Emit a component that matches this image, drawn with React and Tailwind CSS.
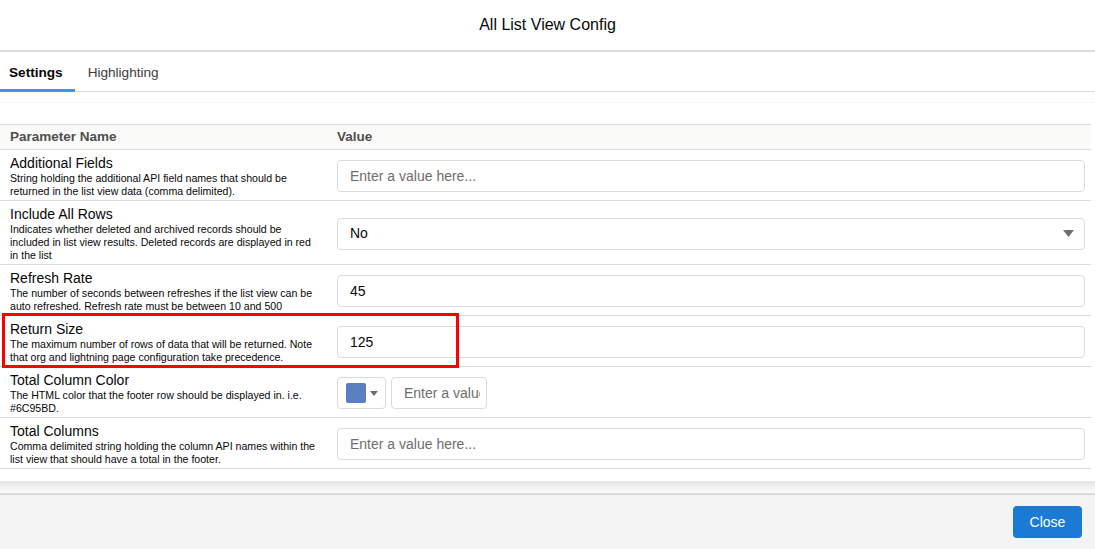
const FONT = { fontFamily: '"Liberation Sans", Arial, sans-serif' }

const ROWS = [
  {
    name: 'Additional Fields',
    desc: ['String holding the additional API field names that should be', 'returned in the list view data (comma delimited).'],
    kind: 'input',
    height: 'h-[51px]',
  },
  {
    name: 'Include All Rows',
    desc: [
      'Indicates whether deleted and archived records should be',
      'included in list view results. Deleted records are displayed in red',
      'in the list',
    ],
    kind: 'select',
    value: 'No',
    height: 'h-[64px]',
  },
  {
    name: 'Refresh Rate',
    desc: ['The number of seconds between refreshes if the list view can be', 'auto refreshed. Refresh rate must be between 10 and 500'],
    kind: 'input',
    value: '45',
    height: 'h-[51px]',
  },
  {
    name: 'Return Size',
    desc: ['The maximum number of rows of data that will be returned. Note', 'that org and lightning page configuration take precedence.'],
    kind: 'input',
    value: '125',
    height: 'h-[51px]',
    marked: true,
  },
  {
    name: 'Total Column Color',
    desc: ['The HTML color that the footer row should be displayed in. i.e.', '#6C95BD.'],
    kind: 'color',
    height: 'h-[51px]',
  },
  {
    name: 'Total Columns',
    desc: ['Comma delimited string holding the column API names within the', 'list view that should have a total in the footer.'],
    kind: 'input',
    height: 'h-[51px]',
  },
]

function Field({ row }) {
  if (row.kind === 'select') {
    return (
      <div className="flex h-[32px] w-full items-center justify-between rounded-[4px] border border-[#dddbda] bg-white pl-[12px] pr-[10px]">
        <span className="text-[14px] text-[#080707]">{row.value}</span>
        <svg width="11" height="8" viewBox="0 0 11 8">
          <path d="M0 0h11L5.5 7z" fill="#706e6b" />
        </svg>
      </div>
    )
  }
  if (row.kind === 'color') {
    // the value box is narrow, so its placeholder is clipped like in the app
    return (
      <div className="flex items-center gap-[5px]">
        <button className="flex h-[32px] w-[49px] items-center rounded-[4px] border border-[#dddbda] bg-white pl-[8px]">
          <span className="h-[20px] w-[20px] rounded-[2px] bg-[#5a7fc0]" />
          <svg className="ml-[4px]" width="8" height="5" viewBox="0 0 8 5">
            <path d="M0 0h8L4 5z" fill="#706e6b" />
          </svg>
        </button>
        <div className="flex h-[32px] w-[96px] items-center rounded-[4px] border border-[#dddbda] bg-white pl-[12px] pr-[6px]">
          <span className="block w-full overflow-hidden whitespace-nowrap text-[14px] text-[#706e6b]">Enter a value here...</span>
        </div>
      </div>
    )
  }
  return (
    <div className="flex h-[32px] w-full items-center rounded-[4px] border border-[#dddbda] bg-white pl-[12px]">
      {row.value ? (
        <span className="text-[14px] text-[#080707]">{row.value}</span>
      ) : (
        <span className="text-[14px] text-[#706e6b]">Enter a value here...</span>
      )}
    </div>
  )
}

export default function App() {
  return (
    <div className="flex h-[549px] w-[1095px] flex-col overflow-hidden bg-white text-[#080707]" style={FONT}>
      {/* header */}
      <div className="flex h-[52px] shrink-0 items-center justify-center border-b-2 border-[#dddbda] pb-[1px]">
        <h1 className="text-[16px] text-[#080707]">All List View Config</h1>
      </div>

      {/* tabs */}
      <div className="flex h-[40px] shrink-0 items-end border-b border-[#dddbda]">
        <div className="-mb-px flex h-[40px] items-center border-b-[3px] border-[#4a90e2] pl-[9px] pr-[12px] pt-[5px] text-[13.6px] font-bold text-[#080707]">
          Settings
        </div>
        <div className="flex h-[39px] items-center pl-[13px] pt-[4px] text-[13.6px] text-[#3e3e3c]">Highlighting</div>
      </div>

      <div className="h-[11px] shrink-0 border-b border-[#f6f6f6]" />
      <div className="h-[21px] shrink-0" />

      {/* table */}
      <div className="mr-[4px] shrink-0 border-t border-[#dddbda]">
        <div className="flex h-[25px] items-center border-b border-[#dddbda] bg-[#fafaf9] pt-[1px] text-[13.5px] font-bold text-[#514f4d]">
          <div className="w-[327px] pl-[10px]">Parameter Name</div>
          <div className="pl-[10px]">Value</div>
        </div>
        {ROWS.map((row) => (
          <div key={row.name} className={`relative flex items-center border-b border-[#dddbda] pt-[2px] ${row.height}`}>
            <div className="flex w-[327px] flex-col pl-[10px]">
              <span className="text-[14px] leading-[18px] text-[#080707]">{row.name}</span>
              {row.desc.map((line) => (
                <span key={line} className="whitespace-nowrap text-[10.6px] leading-[13px] text-[#080707]">
                  {line}
                </span>
              ))}
            </div>
            <div className="flex flex-1 pl-[10px] pr-[6px]">
              <Field row={row} />
            </div>
            {row.marked && (
              <div className="pointer-events-none absolute left-[2px] top-[-3px] h-[55px] w-[457px] border-[3px] border-[#ff0000]" />
            )}
          </div>
        ))}
      </div>

      <div className="h-[12px] shrink-0" />
      <div className="h-[12px] shrink-0 bg-gradient-to-b from-[#e4e4e4] to-[#fcfcfc]" />

      {/* footer */}
      <div className="flex flex-1 items-center justify-end border-t-2 border-[#dddbda] bg-[#f3f3f3] pr-[13px]">
        <button className="h-[32px] w-[69px] rounded-[4px] bg-[#1b7bd4] text-[14px] text-white">Close</button>
      </div>
    </div>
  )
}
